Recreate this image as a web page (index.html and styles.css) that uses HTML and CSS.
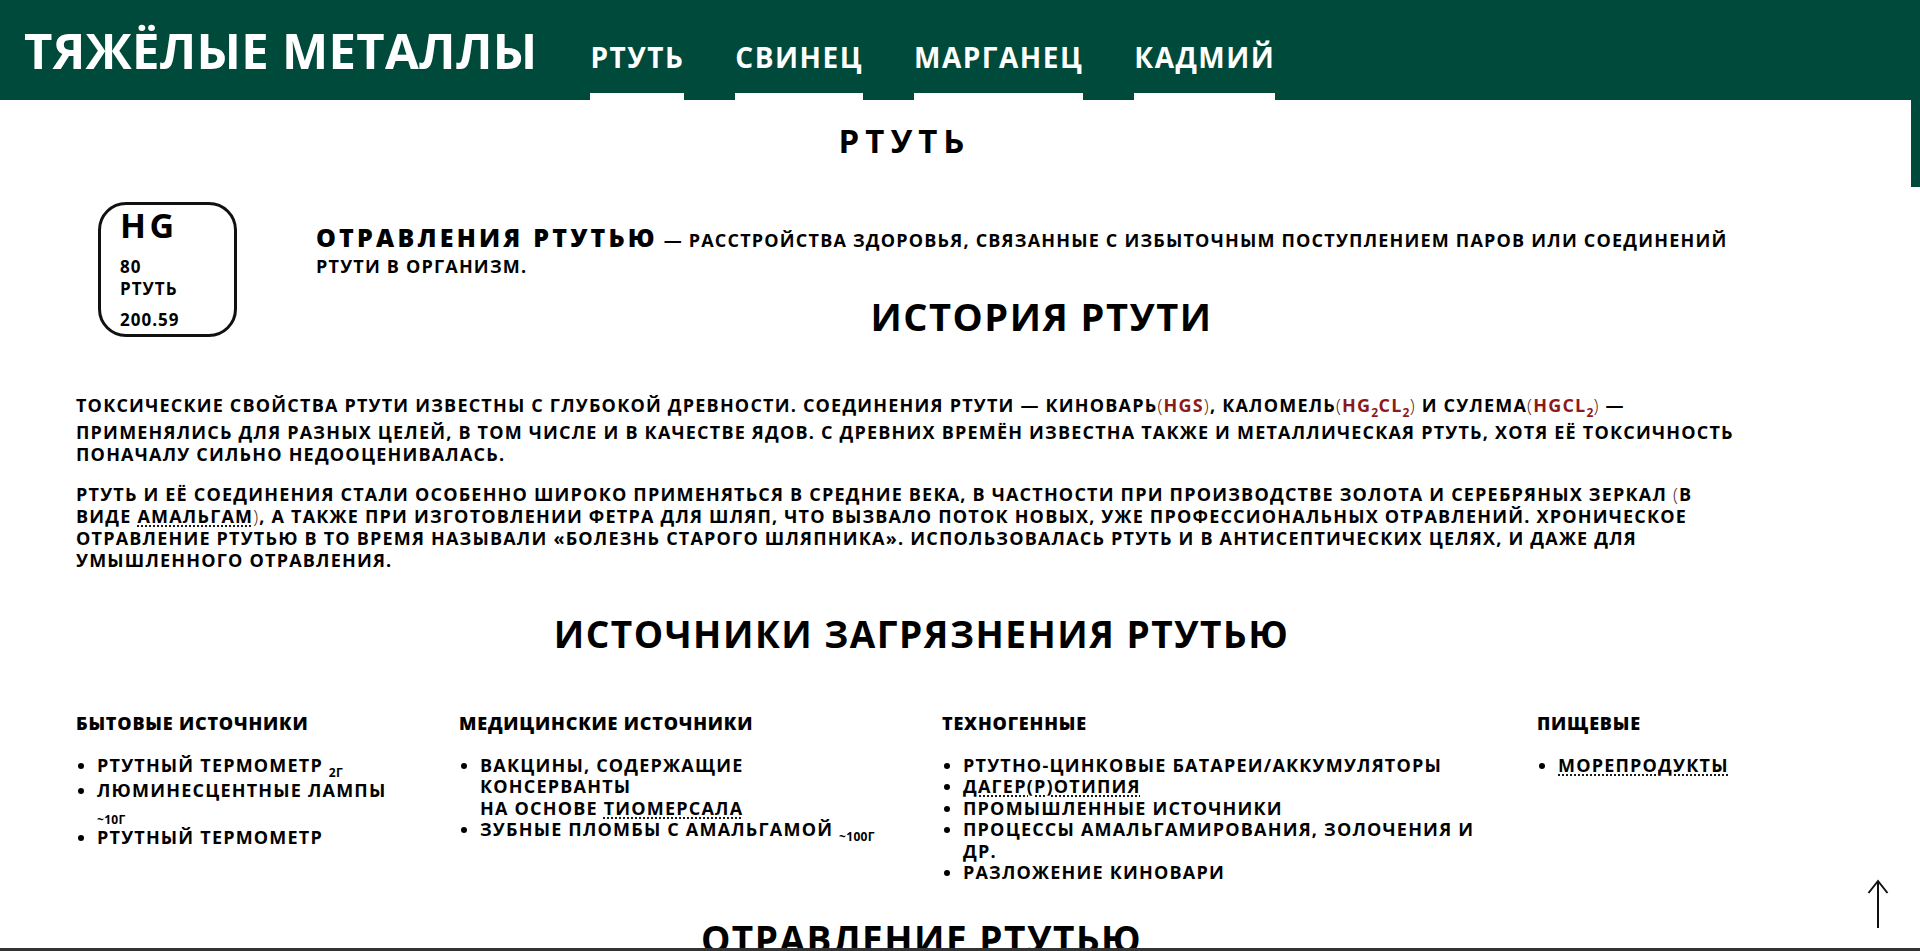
FILE: index.html
```html
<!DOCTYPE html>
<html lang="ru">
<head>
<meta charset="utf-8">
<title>Тяжёлые металлы — Ртуть</title>
<link rel="stylesheet" href="styles.css">
</head>
<body>
<header class="topbar">
  <div class="logo">Тяжёлые металлы</div>
  <nav class="nav">
    <a class="nav-link" href="#">Ртуть</a>
    <a class="nav-link" href="#">Свинец</a>
    <a class="nav-link" href="#">Марганец</a>
    <a class="nav-link" href="#">Кадмий</a>
  </nav>
</header>

<main class="content">
  <h1 class="page-title">Ртуть</h1>

  <section class="intro">
    <div class="element-card">
      <div class="el-symbol">Hg</div>
      <div class="el-number">80</div>
      <div class="el-name">Ртуть</div>
      <div class="el-mass">200.59</div>
    </div>
    <div class="intro-text">
      <p class="lead"><strong>Отравления ртутью</strong> — расстройства здоровья, связанные с избыточным поступлением паров или соединений ртути в организм.</p>
      <h2 class="history-title">История ртути</h2>
    </div>
  </section>

  <p class="text">Токсические свойства ртути известны с глубокой древности. Соединения ртути — киноварь<span class="paren">(</span><span class="formula">HgS</span><span class="paren">)</span>, каломель<span class="paren">(</span><span class="formula">Hg<sub>2</sub>Cl<sub>2</sub></span><span class="paren">)</span> и сулема<span class="paren">(</span><span class="formula">HgCl<sub>2</sub></span><span class="paren">)</span> — применялись для разных целей, в том числе и в качестве ядов. С древних времён известна также и металлическая ртуть, хотя её токсичность поначалу сильно недооценивалась.</p>

  <p class="text">Ртуть и её соединения стали особенно широко применяться в средние века, в частности при производстве золота и серебряных зеркал <span class="paren">(</span>в виде <abbr title="сплав ртути с металлами">амальгам</abbr><span class="paren">)</span>, а также при изготовлении фетра для шляп, что вызвало поток новых, уже профессиональных отравлений. Хроническое отравление ртутью в то время называли «болезнь старого шляпника». Использовалась ртуть и в антисептических целях, и даже для умышленного отравления.</p>

  <h2 class="section-title">Источники загрязнения ртутью</h2>

  <div class="sources">
    <div class="source-col">
      <h3 class="col-title">Бытовые источники</h3>
      <ul class="source-list">
        <li>Ртутный термометр <sub>2г</sub></li>
        <li>Люминесцентные лампы <sub>~10г</sub></li>
        <li>Ртутный термометр</li>
      </ul>
    </div>
    <div class="source-col">
      <h3 class="col-title">Медицинские источники</h3>
      <ul class="source-list">
        <li>Вакцины, содержащие консерванты<br>на основе <abbr title="ртутьсодержащий консервант">тиомерсала</abbr></li>
        <li>Зубные пломбы с амальгамой <sub>~100г</sub></li>
      </ul>
    </div>
    <div class="source-col">
      <h3 class="col-title">Техногенные</h3>
      <ul class="source-list">
        <li>Ртутно-цинковые батареи/аккумуляторы</li>
        <li><abbr title="ранний способ фотографии">Дагер(р)отипия</abbr></li>
        <li>Промышленные источники</li>
        <li>Процессы амальгамирования, золочения и др.</li>
        <li>Разложение киновари</li>
      </ul>
    </div>
    <div class="source-col">
      <h3 class="col-title">Пищевые</h3>
      <ul class="source-list">
        <li><abbr title="рыба и моллюски">Морепродукты</abbr></li>
      </ul>
    </div>
  </div>

  <h2 class="section-title section-title--next">Отравление ртутью</h2>
</main>

<div class="scroll-thumb"></div>
<a class="to-top" href="#" aria-label="Наверх">
  <svg width="22" height="50" viewBox="0 0 22 50"><polyline points="1.5,14 11,2 20.5,14" fill="none" stroke="#111" stroke-width="2"/><line x1="11" y1="2" x2="11" y2="49" stroke="#111" stroke-width="2"/></svg>
</a>
<div class="bottom-bar"></div>
</body>
</html>
```

FILE: styles.css
```css
* { box-sizing: border-box; }
html { scrollbar-width: none; }
html::-webkit-scrollbar { display: none; }
body {
  margin: 0;
  font-family: "Open Sans", "Noto Sans", sans-serif;
  color: #000;
  background: #fff;
  text-transform: uppercase;
}

/* header */
.topbar {
  display: flex;
  align-items: stretch;
  gap: 53px;
  height: 100px;
  padding-left: 24px;
  background: #004a3c;
}
.logo {
  align-self: center;
  color: #fff;
  font-size: 49px;
  font-weight: 700;
  letter-spacing: 0.3px;
  line-height: 1;
}
.nav { display: flex; gap: 51px; }
.nav-link {
  display: flex;
  align-items: center;
  padding-top: 20px;
  color: #fff;
  text-decoration: none;
  font-size: 28px;
  font-weight: 700;
  letter-spacing: 1.5px;
  line-height: 1;
  border-bottom: 7px solid #fff;
}

/* content */
.content { padding: 0 153px 0 76px; }
.page-title {
  margin: 19px 0 39px;
  padding-right: 34px;
  text-align: center;
  font-size: 33px;
  line-height: 44px;
  font-weight: 700;
  letter-spacing: 6px;
}

.intro {
  display: flex;
  align-items: flex-start;
  gap: 79px;
  padding-left: 22px;
  margin-bottom: 52px;
}
.element-card {
  flex: none;
  display: flex;
  flex-direction: column;
  width: 139px;
  height: 135px;
  padding: 1px 0 0 19px;
  border: 3px solid #111;
  border-radius: 28px;
}
.el-symbol {
  font-size: 34px;
  line-height: 38px;
  font-weight: 700;
  letter-spacing: 3.5px;
}
.el-number, .el-name, .el-mass {
  font-size: 17px;
  line-height: 22px;
  font-weight: 700;
  letter-spacing: 1px;
}
.el-number { margin-top: 12px; }
.el-mass { margin-top: 9px; }

.intro-text { flex: 1; padding-top: 22px; }
.lead {
  margin: 0;
  font-size: 18px;
  line-height: 26px;
  font-weight: 700;
  letter-spacing: 1.2px;
}
.lead strong {
  font-size: 25px;
  font-weight: 800;
  letter-spacing: 3.2px;
}
.history-title {
  margin: 11px 0 0;
  text-align: center;
  font-size: 38px;
  line-height: 52px;
  font-weight: 700;
  letter-spacing: 1.5px;
}

.text {
  margin: 0 0 18px;
  padding-right: 22px;
  font-size: 18px;
  line-height: 22px;
  font-weight: 700;
  letter-spacing: 1.2px;
}
.formula { color: #8b1a1a; }
.paren { font-weight: 300; color: #4a1a10; }
sub { font-size: 12px; line-height: 16px; letter-spacing: 0.3px; }
abbr[title] { text-decoration: underline dotted; text-underline-offset: 3px; }

.section-title {
  margin: 38px 0 0;
  text-align: center;
  font-size: 37px;
  line-height: 50px;
  font-weight: 700;
  letter-spacing: 1.5px;
}
.section-title--next { margin-top: 30px; }

.sources {
  display: grid;
  grid-template-columns: 335px 435px 547px 1fr;
  column-gap: 48px;
  margin-top: 54px;
}
.col-title {
  margin: 0;
  font-size: 18px;
  line-height: 20px;
  font-weight: 800;
  letter-spacing: 0.8px;
}
.source-list {
  margin: 22px 0 0;
  padding-left: 21px;
  font-size: 18px;
  line-height: 21.5px;
  font-weight: 700;
  letter-spacing: 1.2px;
}

/* overlays */
.scroll-thumb {
  position: fixed;
  top: 100px;
  right: 0;
  width: 9px;
  height: 87px;
  background: #004a3c;
}
.to-top {
  position: fixed;
  right: 31px;
  bottom: 22px;
  display: block;
  width: 22px;
  height: 50px;
}
.to-top svg { display: block; }
.bottom-bar {
  position: fixed;
  left: 0;
  right: 0;
  bottom: 0;
  height: 3px;
  background: #333;
}
```
